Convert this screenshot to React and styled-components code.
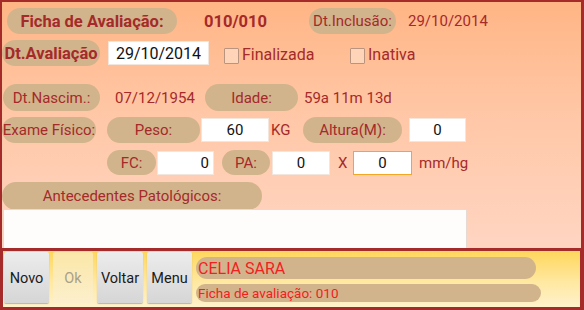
import styled, { createGlobalStyle } from 'styled-components';

const GlobalStyle = createGlobalStyle`
  html, body {
    margin: 0;
    padding: 0;
    overflow: hidden;
    font-family: Roboto, 'Noto Sans', sans-serif;
  }
`;

const dark = '#a52a2a';

export default function App() {
  return (
    <>
      <GlobalStyle />
      <Screen>
        <Form>
          <Row $top={6} $h={26}>
            <Pill $ml={5} $w={170} $bold>Ficha de Avaliação:</Pill>
            <Value $ml={27} $w={75} $bold>010/010</Value>
            <Pill $ml={30} $w={87}>Dt.Inclusão:</Pill>
            <Value $ml={12}>29/10/2014</Value>
          </Row>
          <Row $top={6} $h={26}>
            <Pill $w={98} $bold>Dt.Avaliação</Pill>
            <Field $ml={8} $w={101} $h={24} $big>29/10/2014</Field>
            <Check $ml={15} />
            <Label $ml={3} $w={75}>Finalizada</Label>
            <Check $ml={33} />
            <Label $ml={3}>Inativa</Label>
          </Row>
          <Row $top={18} $h={27}>
            <Pill $ml={1} $w={97}>Dt.Nascim.:</Pill>
            <Value $ml={15} $w={80}>07/12/1954</Value>
            <Pill $ml={10} $w={93}>Idade:</Pill>
            <Value $ml={6}>59a 11m 13d</Value>
          </Row>
          <Row $top={6} $h={26}>
            <Pill $w={94}>Exame Físico:</Pill>
            <Pill $ml={11} $w={93}>Peso:</Pill>
            <Field $ml={1} $w={68}>60</Field>
            <Value $ml={2} $w={20}>KG</Value>
            <Pill $ml={12} $w={99}>Altura(M):</Pill>
            <Field $ml={7} $w={57}>0</Field>
          </Row>
          <Row $top={7} $h={25}>
            <Pill $ml={105} $w={49}>FC:</Pill>
            <Field $ml={1} $w={57} $align="flex-end">0</Field>
            <Pill $ml={8} $w={48}>PA:</Pill>
            <Field $ml={2} $w={58}>0</Field>
            <Value $ml={8} $w={10}>X</Value>
            <Field $ml={5} $w={59} $focus>0</Field>
            <Value $ml={7}>mm/hg</Value>
          </Row>
          <Row $top={7} $h={28}>
            <Pill $w={260}>Antecedentes Patológicos:</Pill>
          </Row>
          <TextArea />
        </Form>
        <Footer>
          <Button>Novo</Button>
          <Button $w={40} $disabled>Ok</Button>
          <Button $w={46}>Voltar</Button>
          <Button>Menu</Button>
          <Info>
            <InfoPill $h={22} $w={340} $size={16}>CELIA SARA</InfoPill>
            <InfoPill $h={18} $w={345} $size={13.5}>Ficha de avaliação: 010</InfoPill>
          </Info>
        </Footer>
      </Screen>
    </>
  );
}

const Screen = styled.div`
  width: 584px;
  height: 310px;
  display: flex;
  flex-direction: column;
`;

const Form = styled.div`
  height: 248px;
  box-sizing: border-box;
  border-top: 2px solid ${dark};
  border-left: 2px solid ${dark};
  border-right: 3px solid ${dark};
  background: linear-gradient(to bottom, #ffb585 0%, #ffc7a6 45%, #ffd5c2 100%);
  overflow: hidden;
  display: flex;
  flex-direction: column;
`;

const Row = styled.div`
  display: flex;
  align-items: center;
  height: ${(p) => p.$h}px;
  margin-top: ${(p) => p.$top}px;
  flex-shrink: 0;
`;

const Pill = styled.div`
  box-sizing: border-box;
  width: ${(p) => p.$w}px;
  height: 100%;
  margin-left: ${(p) => p.$ml || 0}px;
  border-radius: 14px;
  background: #d2b48c;
  color: ${dark};
  display: flex;
  align-items: center;
  justify-content: center;
  font-size: ${(p) => (p.$bold ? 16.5 : 15)}px;
  font-weight: ${(p) => (p.$bold ? 700 : 400)};
  white-space: nowrap;
  flex-shrink: 0;
`;

const Value = styled.span`
  margin-left: ${(p) => p.$ml || 0}px;
  width: ${(p) => (p.$w ? `${p.$w}px` : 'auto')};
  color: ${dark};
  font-size: ${(p) => (p.$bold ? 16.5 : 15)}px;
  font-weight: ${(p) => (p.$bold ? 700 : 400)};
  white-space: nowrap;
  flex-shrink: 0;
`;

const Label = styled(Value)`
  font-size: 16px;
  padding-top: 3px;
`;

const Field = styled.div`
  box-sizing: border-box;
  width: ${(p) => p.$w}px;
  height: ${(p) => p.$h || 24}px;
  margin-left: ${(p) => p.$ml || 0}px;
  background: #ffffff;
  border: 1px solid ${(p) => (p.$focus ? '#f5a623' : '#f3e6dc')};
  display: flex;
  align-items: center;
  justify-content: ${(p) => p.$align || 'center'};
  padding: 0 4px;
  color: #111;
  font-size: ${(p) => (p.$big ? 16 : 15)}px;
  flex-shrink: 0;
`;

const Check = styled.span`
  box-sizing: border-box;
  width: 15px;
  height: 16px;
  margin-left: ${(p) => p.$ml || 0}px;
  margin-top: 6px;
  border: 1px solid #b9957f;
  border-radius: 1px;
  background: rgba(255, 235, 220, 0.5);
  flex-shrink: 0;
`;

const TextArea = styled.div`
  box-sizing: border-box;
  width: 464px;
  height: 50px;
  margin: -1px 0 0 1px;
  background: #fffdfb;
  border: 1px solid #e6dad2;
  flex-shrink: 0;
`;

const Footer = styled.div`
  height: 62px;
  box-sizing: border-box;
  border: 3px solid ${dark};
  border-right-width: 4px;
  background: linear-gradient(to bottom, #ffd75c 0%, #ffe8a0 55%, #fff2cc 100%);
  display: flex;
  align-items: flex-start;
  gap: 4px;
  padding: 1px 1px 0;
`;

const Button = styled.div`
  box-sizing: border-box;
  width: ${(p) => p.$w || 45}px;
  height: 51px;
  border-radius: 2px;
  background: ${(p) =>
    p.$disabled
      ? 'linear-gradient(to bottom, #fbe7a8, #fcefcc)'
      : 'linear-gradient(to bottom, #ececec, #d6d6d6)'};
  box-shadow: ${(p) => (p.$disabled ? 'none' : '0 1px 1px rgba(0,0,0,0.25)')};
  color: ${(p) => (p.$disabled ? '#a9a088' : '#1a1a1a')};
  font-size: 14.5px;
  display: flex;
  align-items: center;
  justify-content: center;
  padding-top: 1px;
  flex-shrink: 0;
`;

const Info = styled.div`
  display: flex;
  flex-direction: column;
  gap: 5px;
  padding-top: 5px;
`;

const InfoPill = styled.div`
  box-sizing: border-box;
  width: ${(p) => p.$w}px;
  height: ${(p) => p.$h}px;
  border-radius: 11px;
  background: #d2b48c;
  color: #f42020;
  font-size: ${(p) => p.$size}px;
  display: flex;
  align-items: center;
  padding-left: 2px;
  white-space: nowrap;
`;
